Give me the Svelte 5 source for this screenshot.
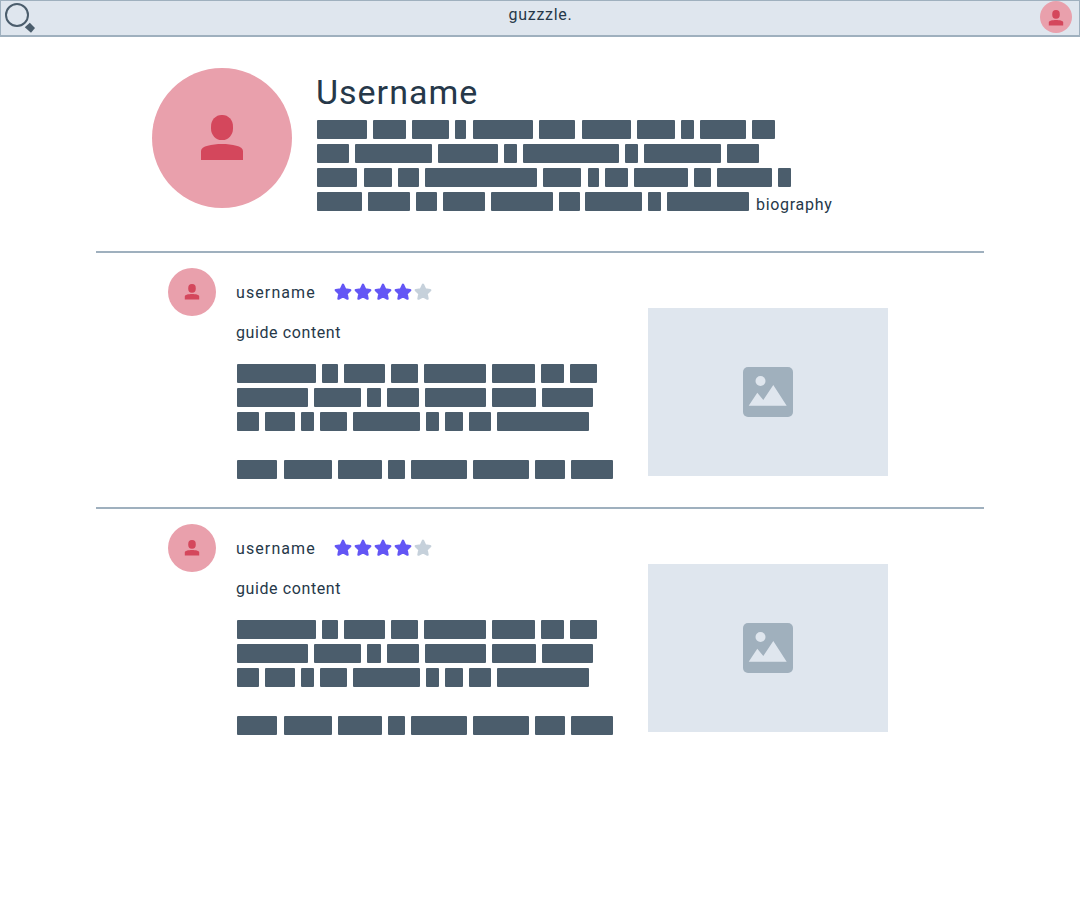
<script>
  // redacted words as [left, right] page coordinates of each block
  const bio = [
    [[317,367],[373,406],[412,449],[455,466],[473,533],[539,575],[582,631],[637,675],[681,694],[700,746],[752,775]],
    [[317,349],[355,432],[438,498],[504,517],[523,619],[625,638],[644,721],[727,759]],
    [[317,357],[364,392],[398,419],[425,537],[543,581],[588,599],[605,628],[634,688],[694,711],[717,772],[778,791]],
    [[317,362],[368,410],[416,437],[443,485],[491,553],[559,580],[585,642],[648,661],[667,749]]
  ];
  const guide = [
    [[237,316],[322,338],[344,385],[391,418],[424,486],[492,535],[541,564],[570,597]],
    [[237,308],[314,361],[367,381],[387,419],[425,486],[492,536],[542,593]],
    [[237,259],[265,295],[301,314],[320,347],[353,420],[426,439],[445,463],[469,491],[497,589]]
  ];
  const guideLast = [[237,277],[284,332],[338,382],[388,405],[411,467],[473,529],[535,565],[571,613]];
  const posts = [1, 2];
  const stars = [true, true, true, true, false];

  // first block starts one pixel in from the text edge
  function blocks(line, origin) {
    return line.map(([a, b], i) => ({
      width: b - a,
      gap: a - (i ? line[i - 1][1] : origin)
    }));
  }
</script>

{#snippet person()}
  <svg class="person" viewBox="0 0 140 140">
    <rect x="59" y="47" width="22" height="25" rx="10.5" ry="11.5" />
    <path d="M49 92V83C49 78 60 76 70 76S91 78 91 83V92Z" />
  </svg>
{/snippet}

{#snippet words(line, origin)}
  <div class="line">
    {#each blocks(line, origin) as b}
      <span class="word" style="width: {b.width}px; margin-left: {b.gap}px"></span>
    {/each}
  </div>
{/snippet}

<header class="topbar">
  <svg class="search" viewBox="0 0 36 36" width="36" height="36">
    <circle cx="17" cy="15" r="11" fill="none" stroke="#4b5d6c" stroke-width="2" />
    <path d="M24.8 27.2L29.8 22.8 35 28 31 32.8Z" fill="#4b5d6c" />
  </svg>
  <span class="brand">guzzzle.</span>
  <div class="avatar tiny">{@render person()}</div>
</header>

<main class="page">
  <section class="profile">
    <div class="avatar big">{@render person()}</div>
    <div class="about">
      <h1>Username</h1>
      {#each bio.slice(0, 3) as line}
        {@render words(line, 316)}
      {/each}
      <div class="lastline">
        {@render words(bio[3], 316)}
        <span class="bio">biography</span>
      </div>
    </div>
  </section>

  {#each posts as post (post)}
    <article class="post">
      <div class="avatar small">{@render person()}</div>
      <div class="body">
        <div class="meta">
          <span class="name">username</span>
          <div class="stars">
            {#each stars as on}
              <svg viewBox="0 0 20 20" width="20" height="20">
                <path
                  class={on ? 'on' : 'off'}
                  d="M10 2.8L12.2 7.4 17.2 8.1 13.6 11.6 14.5 16.6 10 14.2 5.5 16.6 6.4 11.6 2.8 8.1 7.8 7.4Z"
                />
              </svg>
            {/each}
          </div>
        </div>
        <div class="columns">
          <div class="copy">
            <p class="content">guide content</p>
            <div class="para">
              {#each guide as line}
                {@render words(line, 236)}
              {/each}
            </div>
            {@render words(guideLast, 236)}
          </div>
          <div class="thumb">
            <svg viewBox="0 0 50 50" width="50" height="50">
              <rect width="50" height="50" rx="5" fill="#a0b0bd" />
              <circle cx="17.5" cy="14" r="5" fill="#dfe6ee" />
              <path d="M5.7 38.7L14.3 25.7 20.3 33 30.3 18 43.7 38.7Z" fill="#dfe6ee" />
            </svg>
          </div>
        </div>
      </div>
    </article>
  {/each}
</main>

<style>
  :global(body) {
    margin: 0;
    background: #fff;
    color: #263849;
    font-family: Roboto, "Noto Sans", sans-serif;
  }

  .topbar {
    box-sizing: border-box;
    height: 37px;
    display: flex;
    align-items: flex-start;
    justify-content: space-between;
    background: #dfe6ee;
    border: 1px solid #9fb0be;
    border-bottom-width: 2px;
  }

  .search {
    margin: -1px 0 0 -1px;
  }

  .brand {
    margin-left: 5px;
    font-size: 16px;
    line-height: 27px;
    letter-spacing: 0.7px;
  }

  .avatar {
    flex: none;
    border-radius: 50%;
    background: #e9a0ac;
  }

  .avatar.tiny {
    box-sizing: border-box;
    width: 32px;
    height: 32px;
    margin-right: 7px;
    padding-top: 2px;
    display: flex;
    align-items: center;
    justify-content: center;
  }

  /* the header avatar keeps the icon size of the list avatars */
  .avatar.tiny .person {
    flex: none;
    width: 48px;
    height: 48px;
  }

  .avatar.big {
    width: 140px;
    height: 140px;
  }

  .avatar.small {
    width: 48px;
    height: 48px;
  }

  .person {
    display: block;
    width: 100%;
    height: 100%;
    fill: #d4475c;
  }

  .page {
    width: 888px;
    margin: 0 auto;
  }

  .profile {
    box-sizing: border-box;
    height: 214px;
    display: flex;
    gap: 24px;
    padding: 31px 0 0 56px;
  }

  h1 {
    margin: 0;
    height: 52px;
    font-size: 34px;
    font-weight: 400;
    line-height: 49px;
    letter-spacing: 1px;
  }

  .line {
    display: flex;
    height: 24px;
  }

  .word {
    height: 19px;
    background: #4b5d6c;
    border-radius: 1px;
  }

  .lastline {
    display: flex;
  }

  .bio {
    margin-left: 7px;
    font-size: 16px;
    line-height: 26px;
    letter-spacing: 0.7px;
  }

  .post {
    box-sizing: border-box;
    height: 256px;
    display: flex;
    gap: 20px;
    padding: 15px 0 0 72px;
    border-top: 2px solid #9fb0be;
  }

  .body {
    flex: 1;
  }

  .meta {
    display: flex;
    align-items: center;
    gap: 17.5px;
    height: 48px;
  }

  .name {
    font-size: 16px;
    letter-spacing: 1.1px;
  }

  .content {
    font-size: 16px;
    letter-spacing: 0.6px;
  }

  .stars {
    display: flex;
  }

  .stars svg {
    display: block;
  }

  .stars path {
    stroke-width: 2.4;
    stroke-linejoin: round;
  }

  .on {
    fill: #6356f5;
    stroke: #6356f5;
  }

  .off {
    fill: #c6d1db;
    stroke: #c6d1db;
  }

  .columns {
    display: flex;
    justify-content: space-between;
    padding-right: 96px;
    margin-top: -8px;
  }

  .copy {
    padding-top: 13px;
  }

  .content {
    margin: 0 0 19px;
    height: 24px;
    line-height: 24px;
  }

  .para {
    margin-bottom: 24px;
  }

  .thumb {
    width: 240px;
    height: 168px;
    display: flex;
    align-items: center;
    justify-content: center;
    background: #dfe6ee;
  }
</style>
